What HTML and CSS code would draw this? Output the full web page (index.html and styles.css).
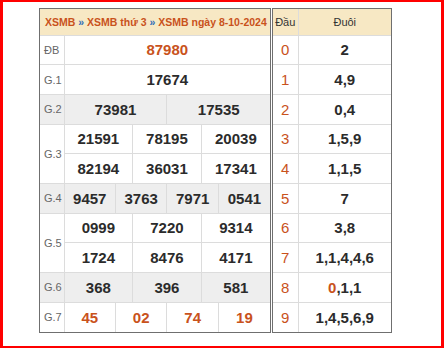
FILE: index.html
```html
<!DOCTYPE html>
<html>
<head>
<meta charset="utf-8">
<link rel="stylesheet" href="styles.css">
</head>
<body>
<div class="frame">
  <div class="tables">
    <div class="box box-main">
      <table class="kq">
        <colgroup>
          <col class="c-label">
          <col><col><col><col><col><col><col><col><col><col><col><col>
        </colgroup>
        <tr class="head">
          <th colspan="13" class="title"><span class="lnk">XSMB</span> <span class="sep">»</span> <span class="lnk">XSMB thứ 3</span> <span class="sep">»</span> <span class="lnk">XSMB ngày 8-10-2024</span></th>
        </tr>
        <tr>
          <td class="lbl">ĐB</td>
          <td colspan="12" class="num red">87980</td>
        </tr>
        <tr>
          <td class="lbl">G.1</td>
          <td colspan="12" class="num">17674</td>
        </tr>
        <tr class="alt">
          <td class="lbl">G.2</td>
          <td colspan="6" class="num">73981</td>
          <td colspan="6" class="num">17535</td>
        </tr>
        <tr>
          <td class="lbl" rowspan="2">G.3</td>
          <td colspan="4" class="num">21591</td>
          <td colspan="4" class="num">78195</td>
          <td colspan="4" class="num">20039</td>
        </tr>
        <tr>
          <td colspan="4" class="num">82194</td>
          <td colspan="4" class="num">36031</td>
          <td colspan="4" class="num">17341</td>
        </tr>
        <tr class="alt">
          <td class="lbl">G.4</td>
          <td colspan="3" class="num">9457</td>
          <td colspan="3" class="num">3763</td>
          <td colspan="3" class="num">7971</td>
          <td colspan="3" class="num">0541</td>
        </tr>
        <tr>
          <td class="lbl" rowspan="2">G.5</td>
          <td colspan="4" class="num">0999</td>
          <td colspan="4" class="num">7220</td>
          <td colspan="4" class="num">9314</td>
        </tr>
        <tr>
          <td colspan="4" class="num">1724</td>
          <td colspan="4" class="num">8476</td>
          <td colspan="4" class="num">4171</td>
        </tr>
        <tr class="alt">
          <td class="lbl">G.6</td>
          <td colspan="4" class="num">368</td>
          <td colspan="4" class="num">396</td>
          <td colspan="4" class="num">581</td>
        </tr>
        <tr>
          <td class="lbl">G.7</td>
          <td colspan="3" class="num red">45</td>
          <td colspan="3" class="num red">02</td>
          <td colspan="3" class="num red">74</td>
          <td colspan="3" class="num red">19</td>
        </tr>
      </table>
    </div>
    <div class="box box-side">
      <table class="kq loto">
        <colgroup>
          <col class="c-dau">
          <col>
        </colgroup>
        <tr class="head">
          <th class="hcol">Đầu</th>
          <th class="hcol">Đuôi</th>
        </tr>
        <tr><td class="dau">0</td><td class="duoi">2</td></tr>
        <tr><td class="dau">1</td><td class="duoi">4,9</td></tr>
        <tr><td class="dau">2</td><td class="duoi">0,4</td></tr>
        <tr><td class="dau">3</td><td class="duoi">1,5,9</td></tr>
        <tr><td class="dau">4</td><td class="duoi">1,1,5</td></tr>
        <tr><td class="dau">5</td><td class="duoi">7</td></tr>
        <tr><td class="dau">6</td><td class="duoi">3,8</td></tr>
        <tr><td class="dau">7</td><td class="duoi">1,1,4,4,6</td></tr>
        <tr><td class="dau">8</td><td class="duoi"><span class="hl">0</span>,1,1</td></tr>
        <tr><td class="dau">9</td><td class="duoi">1,4,5,6,9</td></tr>
      </table>
    </div>
  </div>
</div>
</body>
</html>
```

FILE: styles.css
```css
html, body {
  margin: 0;
  padding: 0;
  background: #fff;
}

body {
  font-family: "Liberation Sans", Arial, sans-serif;
  color: #333;
}

.frame {
  box-sizing: border-box;
  width: 444px;
  height: 348px;
  border-style: solid;
  border-color: #ff0000;
  border-width: 2px 3px 2px 3px;
  padding: 6px 0 0 36px;
}

.tables {
  display: flex;
  align-items: flex-start;
  gap: 1px;
}

.box {
  border: 1px solid #6f6f6f;
  background: #fff;
}

.box-main {
  width: 230px;
}

.box-side {
  width: 118px;
}

.kq {
  width: 100%;
  border-collapse: collapse;
  border-style: hidden;
  table-layout: fixed;
}

.kq td,
.kq th {
  border: 1px solid #dcdcdc;
  padding: 0;
  vertical-align: middle;
}

.c-label {
  width: 24px;
}

.c-dau {
  width: 25px;
}

.head {
  height: 26px;
  background: #f7e8c4;
}

.kq tr {
  height: 29.7px;
}

.kq tr.head {
  height: 26px;
}

.title {
  text-align: left;
  padding-left: 5px !important;
  font-size: 10.5px;
  font-weight: bold;
  white-space: nowrap;
}

.lnk {
  color: #c9521c;
}

.sep {
  color: #2f6db8;
}

.hcol {
  font-size: 11px;
  font-weight: normal;
  color: #333;
  text-align: center;
}

.alt {
  background: #eeeeee;
}

.lbl {
  font-size: 11px;
  color: #666;
  padding-left: 4px !important;
}

.num {
  text-align: center;
  font-size: 15px;
  font-weight: bold;
  color: #2b2b2b;
}

.num.red {
  color: #c9521c;
}

.dau {
  text-align: center;
  font-size: 15px;
  color: #c9521c;
}

.duoi {
  text-align: center;
  font-size: 15px;
  font-weight: bold;
  color: #2b2b2b;
}

.hl {
  color: #c9521c;
}
```
